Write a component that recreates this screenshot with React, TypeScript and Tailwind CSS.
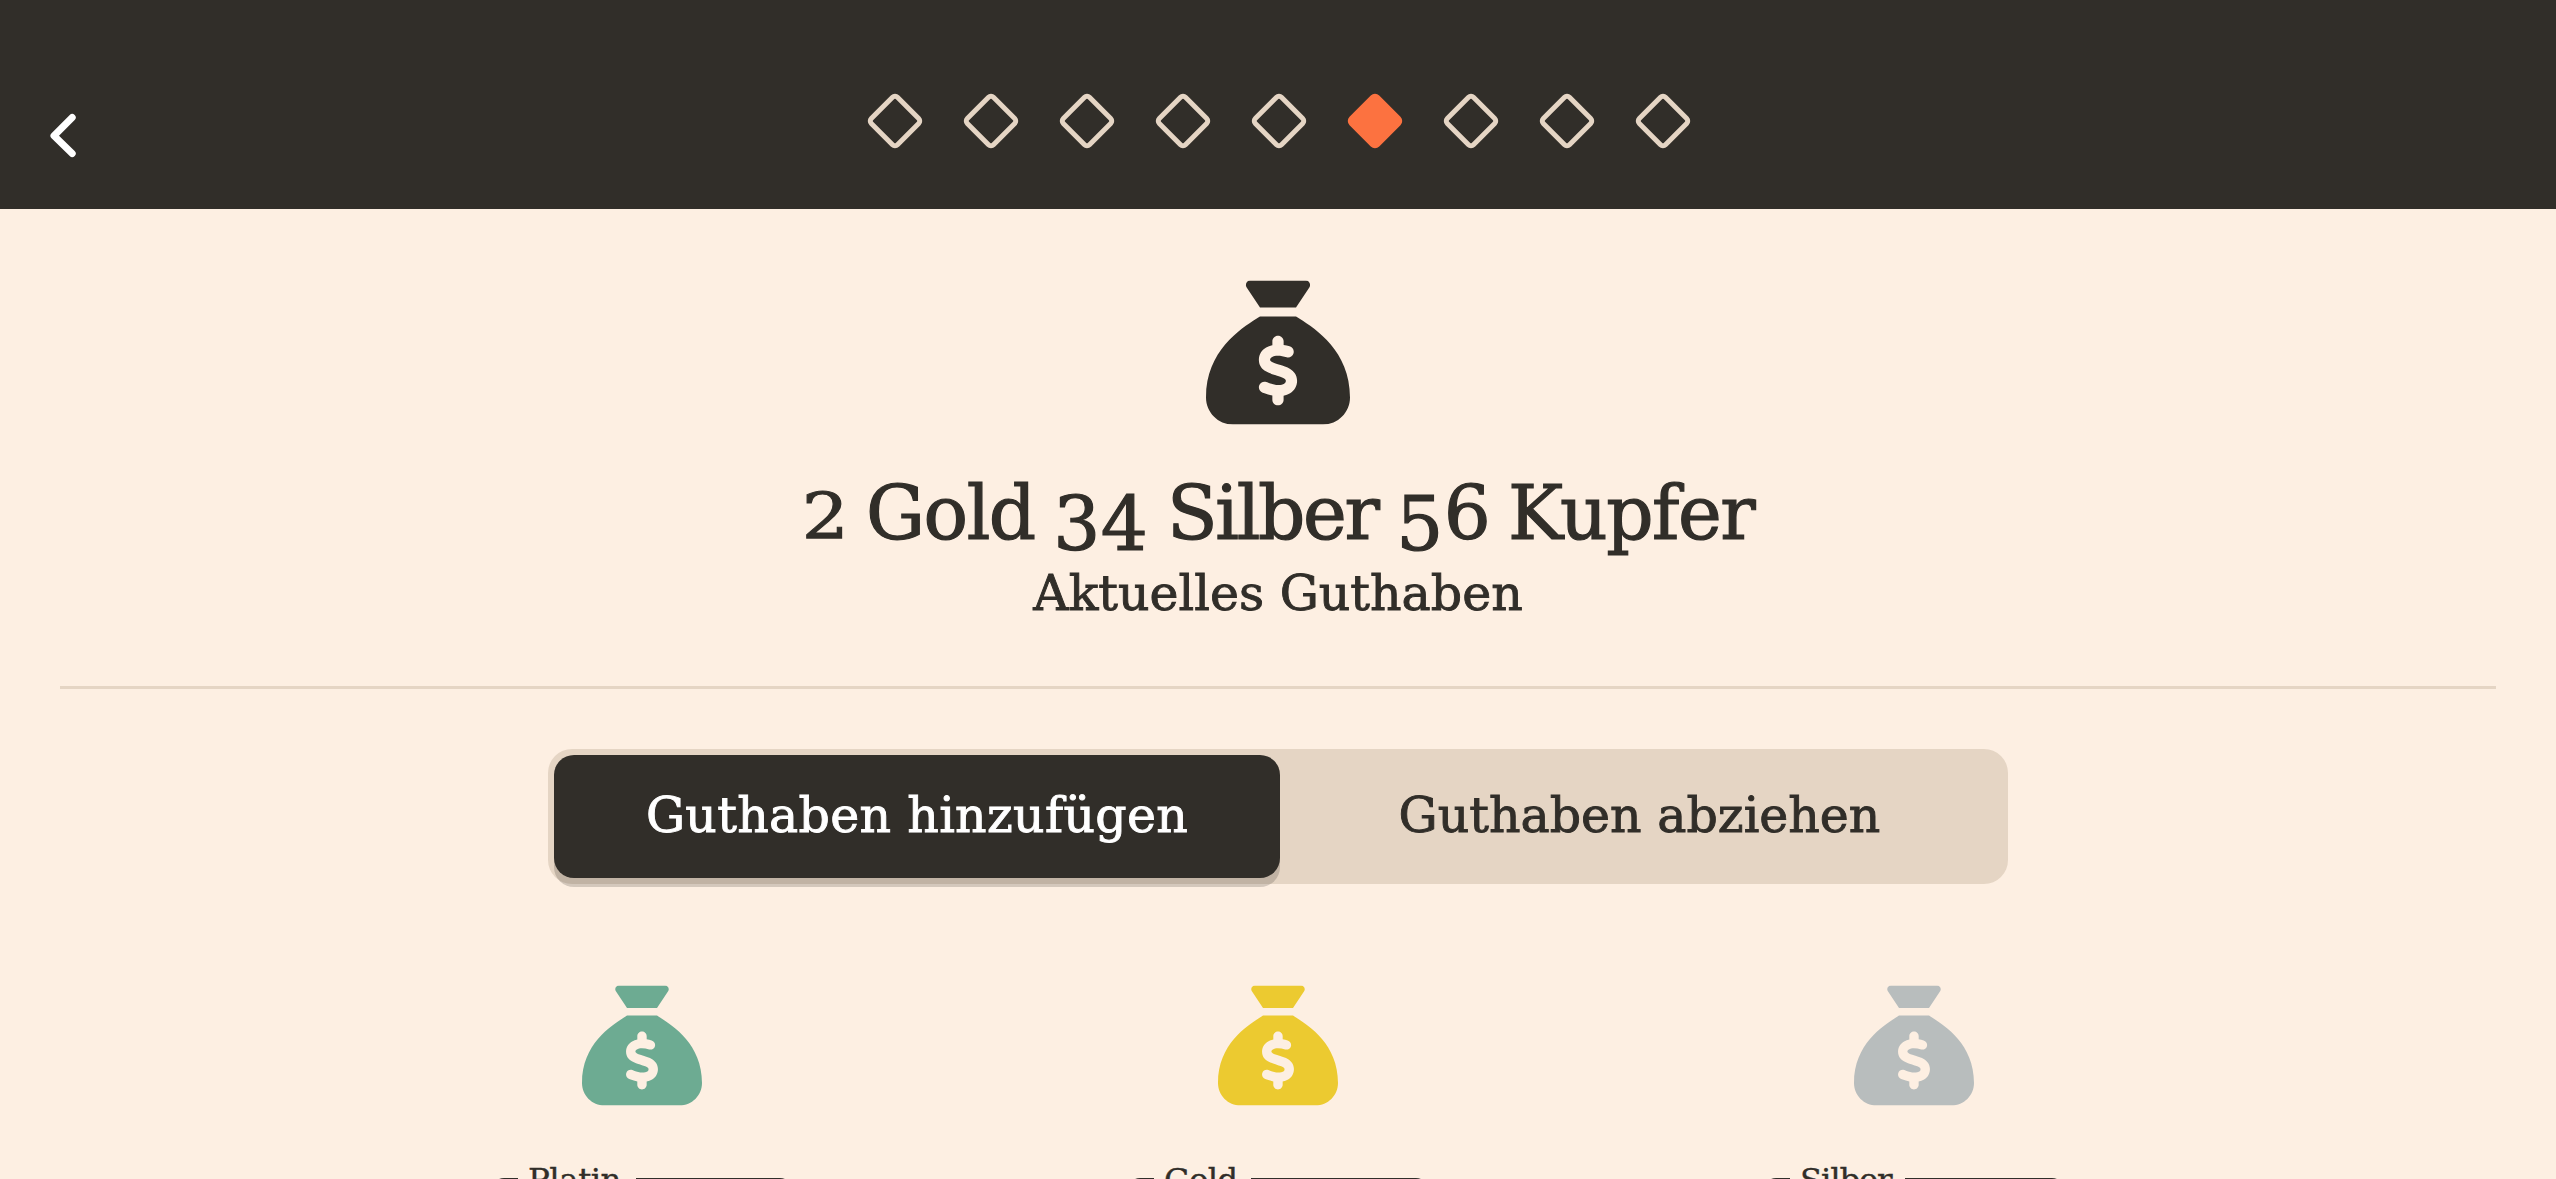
import React from "react";
import { FaSackDollar } from "react-icons/fa6";

const steps = Array.from({ length: 9 }, (_, i) => i);
const ACTIVE_STEP = 5;

const coins = [
  { label: "Platin", color: "text-[#6dab92]", labelStyle: "w-[118px] tracking-[-0.5px]" },
  { label: "Gold", color: "text-[#ecca30]", labelStyle: "w-[97px] tracking-[-0.9px]" },
  { label: "Silber", color: "text-[#b8bdbd]", labelStyle: "w-[115px] tracking-[-1.2px]" },
];

export default function App() {
  return (
    <div className="flex h-[1179px] w-full flex-col overflow-hidden bg-[#fdefe2] font-['DejaVu_Serif',serif] text-[#312e29]">
      <header className="grid h-[209px] shrink-0 grid-cols-[1fr_auto_1fr] bg-[#312e29]">
        <button aria-label="Zurück" className="mt-[112px] ml-[48px] h-[48px] w-[30px]">
          <svg viewBox="0 0 30 48" width="30" height="48" fill="none">
            <path d="M24.2 5.5 6 23.7 24.2 41.5" stroke="#fff" strokeWidth="7" strokeLinecap="round" strokeLinejoin="round" />
          </svg>
        </button>
        <div className="mt-[100px] ml-[2px] flex h-[42px] gap-[54px]">
          {steps.map((i) => (
            <span
              key={i}
              className={
                i === ACTIVE_STEP
                  ? "size-[42px] rotate-45 rounded-[6px] bg-[#fc7240]"
                  : "size-[42px] rotate-45 rounded-[6px] border-5 border-[#e5d5c4]"
              }
            />
          ))}
        </div>
        <div />
      </header>

      <section className="mx-[60px] flex h-[480px] shrink-0 flex-col items-center border-b-3 border-[#e5d5c4] pt-[71px]">
        <FaSackDollar className="size-[144px] translate-y-[0.5px]" />
        <h1 className="mt-[44px] h-[90px] text-[74px] leading-[90px] tracking-[-1.5px] whitespace-nowrap [word-spacing:-3.5px] [-webkit-text-stroke:1.2px_#312e29]">
          <span className="inline-block origin-[50%_71px] scale-y-[0.86]">2</span> Gold{" "}
          <span className="relative top-[11px] tracking-[0.5px]">34</span> <span className="tracking-[-2.3px]">Silber</span>{" "}
          <span className="relative top-[11px] tracking-[0.5px]">5</span>6 Kupfer
        </h1>
        <p className="h-[70px] text-[49px] leading-[72px] whitespace-nowrap [-webkit-text-stroke:0.9px_#312e29]">Aktuelles Guthaben</p>
      </section>

      <div className="mx-auto mt-[60px] flex h-[135px] w-[1460px] shrink-0 rounded-[24px] bg-[#e5d5c4] p-[6px] text-[49px] whitespace-nowrap">
        <button className="h-[123px] w-[726px] rounded-[20px] bg-[#312e29] pb-[2px] tracking-[0.3px] text-white shadow-[0_9px_0_rgba(49,46,41,0.2)] [-webkit-text-stroke:0.9px_#fff]">
          Guthaben hinzufügen
        </button>
        <button className="h-[123px] flex-1 pr-[3px] pb-[2px] [-webkit-text-stroke:0.9px_#312e29]">Guthaben abziehen</button>
      </div>

      <div className="mx-auto mt-[101px] grid w-[1908px] shrink-0 grid-cols-3">
        {coins.map((c) => (
          <div key={c.label} className="flex flex-col items-center">
            <FaSackDollar className={`size-[120px] translate-y-[0.5px] ${c.color}`} />
            <div className="mt-[51px] flex w-[300px] items-start">
              <span className="mt-[22px] h-[80px] w-[26px] rounded-l-[12px] border-3 border-r-0 border-[#312e29]" />
              <span className={`${c.labelStyle} mt-[2px] pl-[10px] text-[32.5px] leading-[44px] [-webkit-text-stroke:0.4px_#312e29]`}>
                {c.label}
              </span>
              <span className="mt-[22px] h-[80px] flex-1 rounded-r-[12px] border-3 border-l-0 border-[#312e29]" />
            </div>
          </div>
        ))}
      </div>
    </div>
  );
}
